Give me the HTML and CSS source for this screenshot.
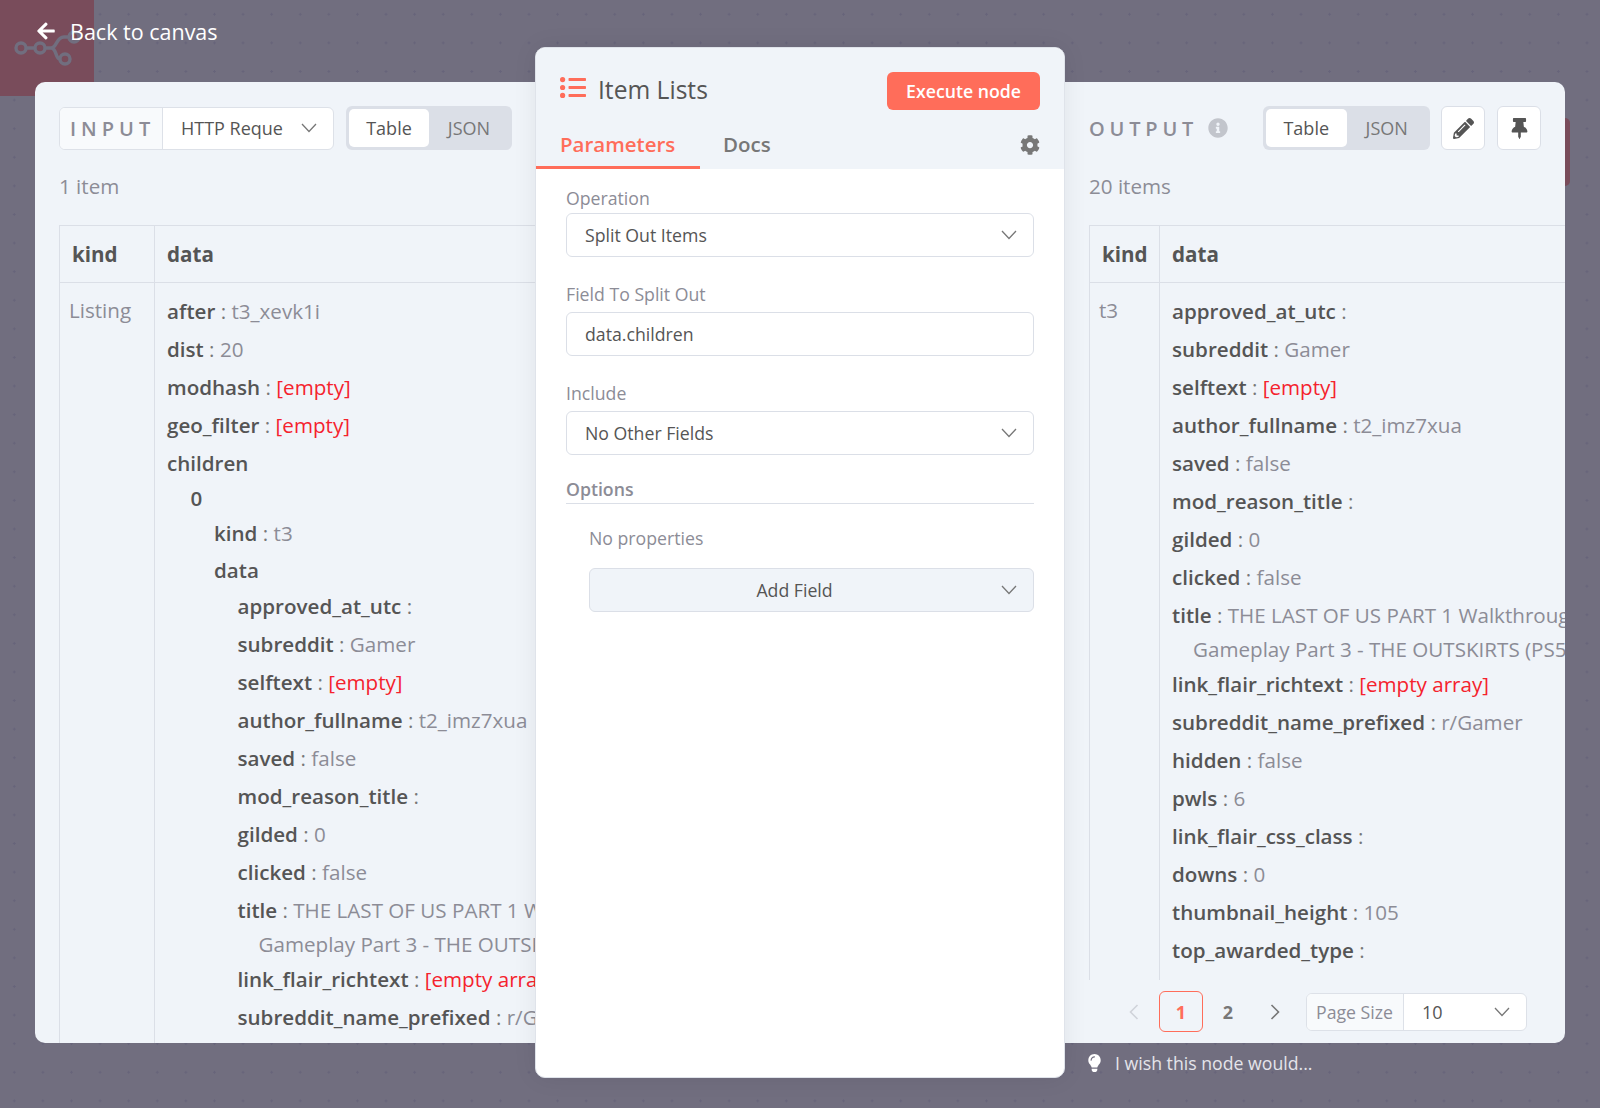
FILE: index.html
```html
<!DOCTYPE html>
<html lang="en">
<head>
<meta charset="utf-8">
<title>Item Lists</title>
<link rel="stylesheet" href="styles.css">
</head>
<body>
<svg class="defs" width="0" height="0" aria-hidden="true">
  <symbol id="chev" viewBox="0 0 16 10"><path d="M1 1l7 7.5L15 1" fill="none" stroke="currentColor" stroke-width="1.3"/></symbol>
</svg>
<div class="canvas">
  <div class="node-bg">
    <svg class="logo" viewBox="0 0 72 40" width="72" height="40"><g fill="none" stroke="#716e7f" stroke-width="3.4"><circle cx="7" cy="20" r="5"/><circle cx="26" cy="20" r="5"/><circle cx="51" cy="31" r="5"/><circle cx="60" cy="9" r="5"/><path d="M12 20h9M31 20h6c6 0 5-11 13-11h5M37 20c6 0 4 11 9 11"/></g></svg>
  </div>

  <a class="back">
    <svg class="back-icon" viewBox="0 0 448 512"><path fill="currentColor" d="M257.5 445.1l-22.2 22.2c-9.4 9.4-24.6 9.4-33.9 0L7 273c-9.4-9.4-9.4-24.6 0-33.9L201.4 44.7c9.4-9.4 24.6-9.4 33.9 0l22.2 22.2c9.5 9.5 9.3 25-.4 34.3L136.6 216H424c13.3 0 24 10.7 24 24v32c0 13.3-10.7 24-24 24H136.6l120.5 114.8c9.8 9.3 10 24.8.4 34.3z"/></svg>
    <span>Back to canvas</span>
  </a>

  <main class="panel">
    <section class="col col-in">
      <div class="bar">
        <div class="combo">
          <span class="combo-label input-label">INPUT</span>
          <span class="combo-value input-value"><span>HTTP Reque</span><svg class="chev"><use href="#chev"/></svg></span>
        </div>
        <div class="toggle"><span class="tg on">Table</span><span class="tg">JSON</span></div>
      </div>
      <div class="count">1 item</div>
      <div class="table table-in">
        <div class="th th-kind">kind</div>
        <div class="th th-data">data</div>
        <div class="td td-kind">Listing</div>
        <div class="td td-data">
          <div class="r"><b>after</b> <i>:</i> <span>t3_xevk1i</span></div>
          <div class="r"><b>dist</b> <i>:</i> <span>20</span></div>
          <div class="r"><b>modhash</b> <i>:</i> <em>[empty]</em></div>
          <div class="r"><b>geo_filter</b> <i>:</i> <em>[empty]</em></div>
          <div class="r t3"><b>children</b></div>
          <div class="nest">
            <div class="r t3"><b>0</b></div>
            <div class="nest">
              <div class="r t1"><b>kind</b> <i>:</i> <span>t3</span></div>
              <div class="r t2"><b>data</b></div>
              <div class="nest">
                <div class="r"><b>approved_at_utc</b> <i>:</i></div>
                <div class="r"><b>subreddit</b> <i>:</i> <span>Gamer</span></div>
                <div class="r"><b>selftext</b> <i>:</i> <em>[empty]</em></div>
                <div class="r"><b>author_fullname</b> <i>:</i> <span>t2_imz7xua</span></div>
                <div class="r"><b>saved</b> <i>:</i> <span>false</span></div>
                <div class="r"><b>mod_reason_title</b> <i>:</i></div>
                <div class="r"><b>gilded</b> <i>:</i> <span>0</span></div>
                <div class="r"><b>clicked</b> <i>:</i> <span>false</span></div>
                <div class="r wrap"><b>title</b> <i>:</i> <span>THE LAST OF US PART 1 Walkthrough<br>Gameplay Part 3 - THE OUTSKIRTS (PS5)</span></div>
                <div class="r"><b>link_flair_richtext</b> <i>:</i> <em>[empty array]</em></div>
                <div class="r"><b>subreddit_name_prefixed</b> <i>:</i> <span>r/Gamer</span></div>
              </div>
            </div>
          </div>
        </div>
      </div>
    </section>

    <div class="col-gap"></div>

    <section class="col col-out">
      <div class="bar">
        <div class="out-title"><span class="out-label">OUTPUT</span>
          <svg class="info" viewBox="0 0 512 512"><path fill="currentColor" d="M256 8C119.043 8 8 119.083 8 256c0 136.997 111.043 248 248 248s248-111.003 248-248C504 119.083 392.957 8 256 8zm0 110c23.196 0 42 18.804 42 42s-18.804 42-42 42-42-18.804-42-42 18.804-42 42-42zm56 254c0 6.627-5.373 12-12 12h-88c-6.627 0-12-5.373-12-12v-24c0-6.627 5.373-12 12-12h12v-64h-12c-6.627 0-12-5.373-12-12v-24c0-6.627 5.373-12 12-12h64c6.627 0 12 5.373 12 12v100h12c6.627 0 12 5.373 12 12v24z"/></svg>
        </div>
        <div class="toggle"><span class="tg on">Table</span><span class="tg">JSON</span></div>
        <button class="icon-btn"><svg class="ib-svg" viewBox="0 0 512 512"><path fill="currentColor" d="M497.9 142.1l-46.1 46.1c-4.7 4.7-12.3 4.7-17 0l-111-111c-4.7-4.7-4.7-12.3 0-17l46.1-46.1c18.7-18.7 49.1-18.7 67.9 0l60.1 60.1c18.8 18.7 18.8 49.1 0 67.9zM284.2 99.8L21.6 362.4.4 483.9c-2.9 16.4 11.4 30.6 27.8 27.8l121.5-21.3 262.6-262.6c4.7-4.7 4.7-12.3 0-17l-111-111c-4.8-4.7-12.4-4.7-17.1 0zM124.1 339.9c-5.5-5.5-5.5-14.3 0-19.8l154-154c5.5-5.5 14.3-5.5 19.8 0s5.5 14.3 0 19.8l-154 154c-5.5 5.5-14.3 5.5-19.8 0zM88 424h48v36.3l-64.5 11.3-31.1-31.1L51.7 376H88v48z"/></svg></button>
        <button class="icon-btn"><svg class="ib-svg" viewBox="0 0 384 512"><path fill="currentColor" d="M298.028 214.267L285.793 96H328c13.255 0 24-10.745 24-24V24c0-13.255-10.745-24-24-24H56C42.745 0 32 10.745 32 24v48c0 13.255 10.745 24 24 24h42.207L85.972 214.267C37.465 236.82 0 277.261 0 328c0 13.255 10.745 24 24 24h136v104.007c0 1.242.289 2.467.845 3.578l24 48c2.941 5.882 11.364 5.893 14.311 0l24-48a8.008 8.008 0 0 0 .845-3.578V352h136c13.255 0 24-10.745 24-24-.001-51.183-37.983-91.42-85.973-113.733z"/></svg></button>
      </div>
      <div class="count">20 items</div>
      <div class="table-clip">
        <div class="table table-out">
          <div class="th th-kind">kind</div>
          <div class="th th-data">data</div>
          <div class="td td-kind">t3</div>
          <div class="td td-data">
            <div class="r"><b>approved_at_utc</b> <i>:</i></div>
            <div class="r"><b>subreddit</b> <i>:</i> <span>Gamer</span></div>
            <div class="r"><b>selftext</b> <i>:</i> <em>[empty]</em></div>
            <div class="r"><b>author_fullname</b> <i>:</i> <span>t2_imz7xua</span></div>
            <div class="r"><b>saved</b> <i>:</i> <span>false</span></div>
            <div class="r"><b>mod_reason_title</b> <i>:</i></div>
            <div class="r"><b>gilded</b> <i>:</i> <span>0</span></div>
            <div class="r"><b>clicked</b> <i>:</i> <span>false</span></div>
            <div class="r wrap"><b>title</b> <i>:</i> <span>THE LAST OF US PART 1 Walkthrough<br>Gameplay Part 3 - THE OUTSKIRTS (PS5)</span></div>
            <div class="r"><b>link_flair_richtext</b> <i>:</i> <em>[empty array]</em></div>
            <div class="r"><b>subreddit_name_prefixed</b> <i>:</i> <span>r/Gamer</span></div>
            <div class="r"><b>hidden</b> <i>:</i> <span>false</span></div>
            <div class="r"><b>pwls</b> <i>:</i> <span>6</span></div>
            <div class="r"><b>link_flair_css_class</b> <i>:</i></div>
            <div class="r"><b>downs</b> <i>:</i> <span>0</span></div>
            <div class="r"><b>thumbnail_height</b> <i>:</i> <span>105</span></div>
            <div class="r"><b>top_awarded_type</b> <i>:</i></div>
            <div class="r"><b>hide_score</b> <i>:</i> <span>false</span></div>
          </div>
        </div>
      </div>
      <div class="pager">
        <svg class="pg-arrow off" viewBox="0 0 10 16"><path d="M8.5 1L1.5 8l7 7" fill="none" stroke="currentColor" stroke-width="1.6"/></svg>
        <span class="pg cur">1</span>
        <span class="pg">2</span>
        <svg class="pg-arrow" viewBox="0 0 10 16"><path d="M1.5 1l7 7-7 7" fill="none" stroke="currentColor" stroke-width="1.6"/></svg>
        <div class="combo combo-sm">
          <span class="combo-label size-label">Page Size</span>
          <span class="combo-value size-value"><span>10</span><svg class="chev"><use href="#chev"/></svg></span>
        </div>
      </div>
    </section>
    <div class="notch"></div>
  </main>

  <footer class="hint">
    <svg class="bulb" viewBox="0 0 352 512"><path fill="currentColor" d="M96.06 454.35c.01 6.29 1.87 12.45 5.36 17.69l17.09 25.69a31.99 31.99 0 0 0 26.64 14.28h61.71a31.99 31.99 0 0 0 26.64-14.28l17.09-25.69a31.989 31.989 0 0 0 5.36-17.69l.04-38.35H96.01l.05 38.35zM0 176c0 44.37 16.45 84.85 43.56 115.78 16.52 18.85 42.36 58.23 52.21 91.45.04.26.07.52.11.78h160.24c.04-.26.07-.51.11-.78 9.85-33.22 35.69-72.6 52.21-91.45C335.55 260.85 352 220.37 352 176 352 78.61 272.91-.3 175.45 0 73.44.31 0 82.97 0 176zm176-80c-44.11 0-80 35.89-80 80 0 8.84-7.16 16-16 16s-16-7.16-16-16c0-61.76 50.24-112 112-112 8.84 0 16 7.16 16 16s-7.16 16-16 16z"/></svg>
    <span>I wish this node would...</span>
  </footer>

  <aside class="editor">
    <header class="ed-head">
      <div class="ed-top">
        <svg class="ed-icon" viewBox="0 0 26 21"><g fill="#ff6d5a"><circle cx="2.6" cy="2.6" r="2.6"/><circle cx="2.6" cy="10.5" r="2.6"/><circle cx="2.6" cy="18.4" r="2.6"/><rect x="8.5" y="1" width="17.5" height="3" rx=".8"/><rect x="8.5" y="9" width="17.5" height="3" rx=".8"/><rect x="8.5" y="17" width="17.5" height="3" rx=".8"/></g></svg>
        <span class="ed-title">Item Lists</span>
        <button class="exec">Execute node</button>
      </div>
      <nav class="tabs">
        <span class="tab active">Parameters</span>
        <span class="tab">Docs</span>
        <svg class="gear" viewBox="0 0 512 512"><path fill="currentColor" d="M487.4 315.7l-42.6-24.6c4.3-23.2 4.3-47 0-70.2l42.6-24.6c4.9-2.8 7.1-8.6 5.5-14-11.1-35.6-30-67.8-54.7-94.6-3.8-4.1-10-5.1-14.8-2.3L380.8 110c-17.9-15.4-38.5-27.3-60.8-35.1V25.8c0-5.6-3.9-10.5-9.4-11.7-36.7-8.2-74.3-7.8-109.2 0-5.5 1.2-9.4 6.1-9.4 11.7V75c-22.2 7.9-42.8 19.8-60.8 35.1L88.7 85.5c-4.9-2.8-11-1.9-14.8 2.3-24.7 26.7-43.6 58.9-54.7 94.6-1.7 5.4.6 11.2 5.5 14L67.3 221c-4.3 23.2-4.3 47 0 70.2l-42.6 24.6c-4.9 2.8-7.1 8.6-5.5 14 11.1 35.6 30 67.8 54.7 94.6 3.8 4.1 10 5.1 14.8 2.3l42.6-24.6c17.9 15.4 38.5 27.3 60.8 35.1v49.2c0 5.6 3.9 10.5 9.4 11.7 36.7 8.2 74.3 7.8 109.2 0 5.5-1.2 9.4-6.1 9.4-11.7v-49.2c22.2-7.9 42.8-19.8 60.8-35.1l42.6 24.6c4.9 2.8 11 1.9 14.8-2.3 24.7-26.7 43.6-58.9 54.7-94.6 1.5-5.5-.7-11.3-5.6-14.1zM256 336c-44.1 0-80-35.9-80-80s35.9-80 80-80 80 35.9 80 80-35.9 80-80 80z"/></svg>
      </nav>
    </header>
    <div class="ed-body">
      <label class="f-label f-first">Operation</label>
      <div class="field field-select"><span>Split Out Items</span><svg class="chev"><use href="#chev"/></svg></div>
      <label class="f-label">Field To Split Out</label>
      <div class="field"><span>data.children</span></div>
      <label class="f-label">Include</label>
      <div class="field field-select"><span>No Other Fields</span><svg class="chev"><use href="#chev"/></svg></div>
      <div class="opt-title">Options</div>
      <div class="opt-body">
        <div class="no-props">No properties</div>
        <div class="add-field"><span>Add Field</span><svg class="chev"><use href="#chev"/></svg></div>
      </div>
    </div>
  </aside>
</div>
</body>
</html>
```

FILE: styles.css
```css
* { box-sizing: border-box; }
html, body { margin: 0; padding: 0; }
body { font-family: "Open Sans", "Noto Sans", sans-serif; color: #555; background: #716e7f; }
.defs { position: absolute; }
.canvas {
  position: relative;
  width: 1600px;
  height: 1108px;
  overflow: hidden;
  padding: 0 35px;
  display: flex;
  flex-direction: column;
  background-color: #716e7f;
  background-image: radial-gradient(circle, #67647a 1px, transparent 1.2px);
  background-size: 28.6px 28.6px;
}
.node-bg { position: absolute; left: 0; top: 0; width: 94px; height: 96px; background: #794c5b; }
.logo { position: absolute; left: 14px; top: 28px; }

.back { position: relative; height: 82px; padding: 0 0 20px 2px; display: flex; align-items: center; gap: 15px; color: #fff; font-size: 21.5px; }
.back-icon { width: 18px; height: 20px; }

.panel { position: relative; height: 961px; flex: none; display: grid; grid-template-columns: 501px 529px 500px; background: #f0f4f9; border-radius: 10px; }
.col { min-width: 0; overflow: hidden; }
.col-in { padding: 24px 0 0 24px; }
.col-out { padding: 24px 0 0 24px; display: flex; flex-direction: column; border-radius: 0 10px 10px 0; }
.notch { position: absolute; right: -5px; top: 36px; width: 5px; height: 68px; background: #794c5b; border-radius: 0 6px 6px 0; }

.bar { display: flex; align-items: center; height: 44px; }
.combo { display: flex; height: 43px; border: 1.5px solid #dde1e8; border-radius: 6px; background: #fff; font-size: 18px; overflow: hidden; }
.combo-label { display: flex; align-items: center; background: #f8fafc; border-right: 1.5px solid #dde1e8; color: #8c8c96; }
.input-label { width: 103px; padding-left: 10px; font-size: 20px; letter-spacing: 5px; font-weight: 600; }
.combo-value { flex: 1; display: flex; align-items: center; justify-content: space-between; color: #555; }
.input-value { width: 170px; padding: 0 16px 0 18px; }
.chev { width: 16px; height: 10px; color: #777; flex: none; }
.toggle { display: flex; margin-left: 12px; height: 44px; padding: 3px; background: #dbdfe7; border-radius: 6px; font-size: 18px; color: #777; }
.tg { width: 80px; display: flex; align-items: center; justify-content: center; border-radius: 5px; }
.tg.on { background: #fff; color: #555; }
.col-out .toggle .tg { width: 80.5px; }

.count { margin: 22px 0 0; height: 53px; font-size: 20.6px; line-height: 27px; color: #8c8c96; padding-top: 1px; }
.table { display: grid; border-top: 1.5px solid #dbdfe7; border-left: 1.5px solid #dbdfe7; width: 1000px; }
.table-in { grid-template-columns: 95px 1fr; }
.table-out { grid-template-columns: 70px 1fr; }
.th { height: 57px; display: flex; align-items: center; font-size: 20.6px; font-weight: 700; color: #555; border-bottom: 1.5px solid #dbdfe7; padding-left: 12px; }
.th-kind, .td-kind { border-right: 1.5px solid #dbdfe7; }
.td-kind { padding: 10px 0 0 9px; font-size: 20.6px; line-height: 34px; color: #8c8c96; }
.td-data { padding: 11px 0 0 12px; font-size: 20.6px; line-height: 34px; white-space: nowrap; min-height: 800px; }

.r { margin-bottom: 4px; }
.r b { font-weight: 600; color: #555; }
.r i { font-style: normal; color: #777; }
.r span { color: #8c8c96; }
.r em { font-style: normal; color: #f5222d; }
.r.t1 { margin-bottom: 3px; }
.r.t2 { margin-bottom: 2px; }
.r.t3 { margin-bottom: 1px; }
.r.wrap { padding-left: 21px; text-indent: -21px; margin-bottom: 1px; }
.nest { padding-left: 23.5px; }

.out-title { width: 174px; display: flex; align-items: center; flex: none; }
.out-label { font-size: 20px; letter-spacing: 4.8px; font-weight: 600; color: #8c8c96; }
.info { width: 20px; height: 20px; margin-left: 10px; color: #c2c5cc; }
.col-out .toggle { margin-left: 0; }
.icon-btn { width: 44px; height: 44px; margin-left: 11px; padding: 0; display: flex; align-items: center; justify-content: center; background: #fff; border: 1.5px solid #dbdfe7; border-radius: 6px; color: #555; }
.icon-btn + .icon-btn { margin-left: 12px; }
.ib-svg { width: 21px; height: 21px; }

.table-clip { height: 755px; flex: none; overflow: hidden; }
.pager { flex: 1; display: flex; align-items: center; font-size: 18px; padding: 0 0 0 40px; }
.pg { width: 44px; height: 41px; display: flex; align-items: center; justify-content: center; font-weight: 700; color: #777; margin-left: 3px; border-radius: 6px; }
.pg.cur { color: #ff6d5a; border: 1.5px solid #ff6d5a; margin-left: 20px; }
.pg-arrow { width: 10px; height: 16px; color: #777; margin-left: 20px; }
.pg-arrow.off { color: #d0d3da; margin-left: 0; }
.combo-sm { height: 38px; width: 221px; margin-left: 26px; }
.size-label { width: 97px; padding-left: 9px; font-size: 17.7px; }
.size-value { padding: 0 16px 0 18px; }

.hint { height: 40px; margin-left: 1053px; padding-bottom: 1px; display: flex; align-items: center; gap: 14px; font-size: 17.7px; color: #e4e4ea; }
.bulb { width: 13px; height: 18px; color: #fff; }

.editor { position: absolute; left: 535px; top: 47px; width: 530px; height: 1031px; background: #fff; border: 1.5px solid #dfe3ea; border-radius: 10px; display: flex; flex-direction: column; overflow: hidden; box-shadow: 0 0 24px rgba(0,0,0,.07); }
.ed-head { background: #f0f4f9; height: 121px; flex: none; }
.ed-top { display: flex; align-items: center; height: 82px; padding: 0 24px; }
.ed-icon { width: 26px; height: 21px; margin-right: 12px; margin-top: -3px; }
.ed-title { font-size: 24.6px; color: #555; flex: 1; }
.exec { width: 153px; height: 38px; margin-top: 4px; padding: 0 0 1px; border: 0; border-radius: 6px; background: #ff6d5a; color: #fff; font: 600 17.7px "Open Sans", sans-serif; }
.tabs { display: flex; align-items: center; height: 39px; padding-right: 24px; }
.tab { font-size: 20.5px; color: #777; height: 39px; line-height: 29px; font-weight: 600; }
.tab.active { color: #ff6d5a; width: 164px; padding-left: 24px; border-bottom: 3px solid #ff6d5a; }
.tab + .tab { margin-left: 23px; flex: 1; }
.gear { width: 20px; height: 20px; color: #777; margin-bottom: 9px; }

.ed-body { flex: 1; padding: 18px 30px 0 30px; display: flex; flex-direction: column; }
.f-label { font-size: 17.7px; line-height: 22px; color: #8c8c96; margin-bottom: 7px; }
.f-first { margin-bottom: 4px; }
.field { height: 44px; flex: none; display: flex; align-items: center; justify-content: space-between; padding: 0 16px 0 18px; border: 1.5px solid #dbdfe7; border-radius: 6px; font-size: 17.7px; color: #555; margin-bottom: 26px; background: #fff; }
.opt-title { font-size: 17.7px; font-weight: 600; color: #8c8c96; line-height: 25px; border-bottom: 1.5px solid #dbdfe7; height: 27px; margin-top: -4px; }
.opt-body { padding: 22px 0 0 23px; }
.no-props { font-size: 17.7px; line-height: 24px; color: #8c8c96; margin-bottom: 18px; }
.add-field { position: relative; height: 44px; display: flex; align-items: center; justify-content: center; padding-right: 34px; background: #f0f4f9; border: 1.5px solid #dbdfe7; border-radius: 6px; font-size: 17.7px; color: #555; }
.add-field .chev { position: absolute; right: 16px; top: 16px; }
```
